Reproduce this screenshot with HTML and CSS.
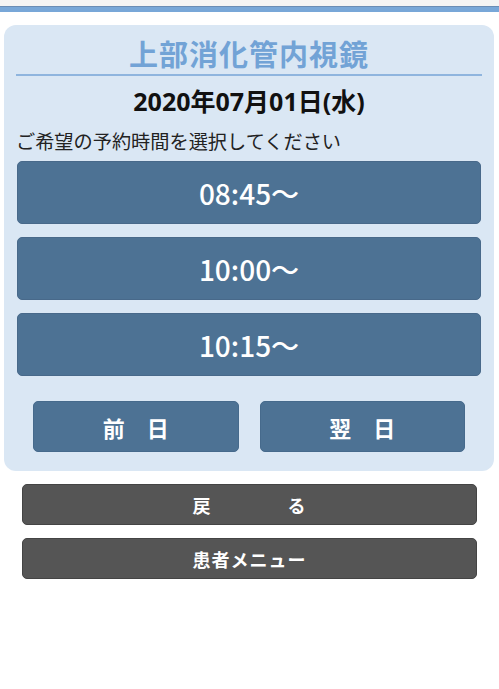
FILE: index.html
```html
<!DOCTYPE html>
<html lang="ja">
<head>
<meta charset="utf-8">
<title>上部消化管内視鏡</title>
<link rel="stylesheet" href="styles.css">
</head>
<body>
<div class="topstrip"></div>
<div class="topbar"></div>
<main class="page">
  <section class="card">
    <h1 class="title">上部消化管内視鏡</h1>
    <div class="date">2020年07月01日(水)</div>
    <p class="hint">ご希望の予約時間を選択してください</p>
    <div class="slots">
      <button class="slot">08:45〜</button>
      <button class="slot">10:00〜</button>
      <button class="slot">10:15〜</button>
    </div>
    <div class="nav">
      <button class="navbtn">前　日</button>
      <button class="navbtn">翌　日</button>
    </div>
  </section>
  <div class="actions">
    <button class="gray">戻　　　　る</button>
    <button class="gray">患者メニュー</button>
  </div>
</main>
</body>
</html>
```

FILE: styles.css
```css
* { box-sizing: border-box; }
html, body {
  margin: 0;
  padding: 0;
  background: #ffffff;
  font-family: "Noto Sans CJK JP", "Noto Sans", sans-serif;
  color: #111;
}
.topstrip {
  height: 6px;
  background: #f4f4f4;
}
.topbar {
  height: 6px;
  background: #78a7d8;
  border-top: 1px solid #6a8db5;
}
.page {
  display: flex;
  flex-direction: column;
}
.card {
  margin: 13px 5px 0 4px;
  background: #dae7f4;
  border-radius: 12px;
  padding: 0 12px 19px 12px;
  display: flex;
  flex-direction: column;
}
.title {
  margin: 0;
  padding-top: 8px;
  padding-bottom: 1px;
  line-height: 40px;
  font-size: 29px;
  font-weight: 700;
  letter-spacing: 1px;
  color: #72a3d6;
  text-align: center;
  border-bottom: 2px solid #8fb5de;
}
.date {
  margin-top: 10px;
  line-height: 30px;
  font-family: "Noto Sans", "Noto Sans CJK JP", sans-serif;
  font-size: 25px;
  font-weight: 700;
  text-align: center;
  color: #111;
}
.hint {
  margin: 13px 0 0 0;
  line-height: 24px;
  font-size: 19.2px;
  color: #222;
}
.slots {
  margin: 8px 1px 0 1px;
  display: flex;
  flex-direction: column;
  gap: 13px;
}
.slot {
  height: 63px;
  border: 1px solid #48698a;
  border-radius: 5px;
  background: #4d7294;
  color: #fff;
  font-family: "Noto Sans CJK JP", "Noto Sans", sans-serif;
  font-size: 28px;
  font-weight: 500;
  padding: 0;
}
.nav {
  margin-top: 25px;
  padding: 0 17px;
  display: flex;
  gap: 21px;
}
.navbtn {
  flex: 1;
  height: 51px;
  border: 1px solid #466a8c;
  border-radius: 5px;
  background: #4d7294;
  color: #fff;
  font-family: inherit;
  font-size: 22px;
  font-weight: 700;
  padding: 0;
}
.actions {
  margin: 13px 22px 0 22px;
  display: flex;
  flex-direction: column;
  gap: 13px;
}
.gray {
  height: 41px;
  border: 1px solid #444;
  border-radius: 5px;
  background: #555555;
  color: #fff;
  font-family: inherit;
  font-size: 18px;
  font-weight: 700;
  letter-spacing: 1px;
  padding: 0;
}
```
